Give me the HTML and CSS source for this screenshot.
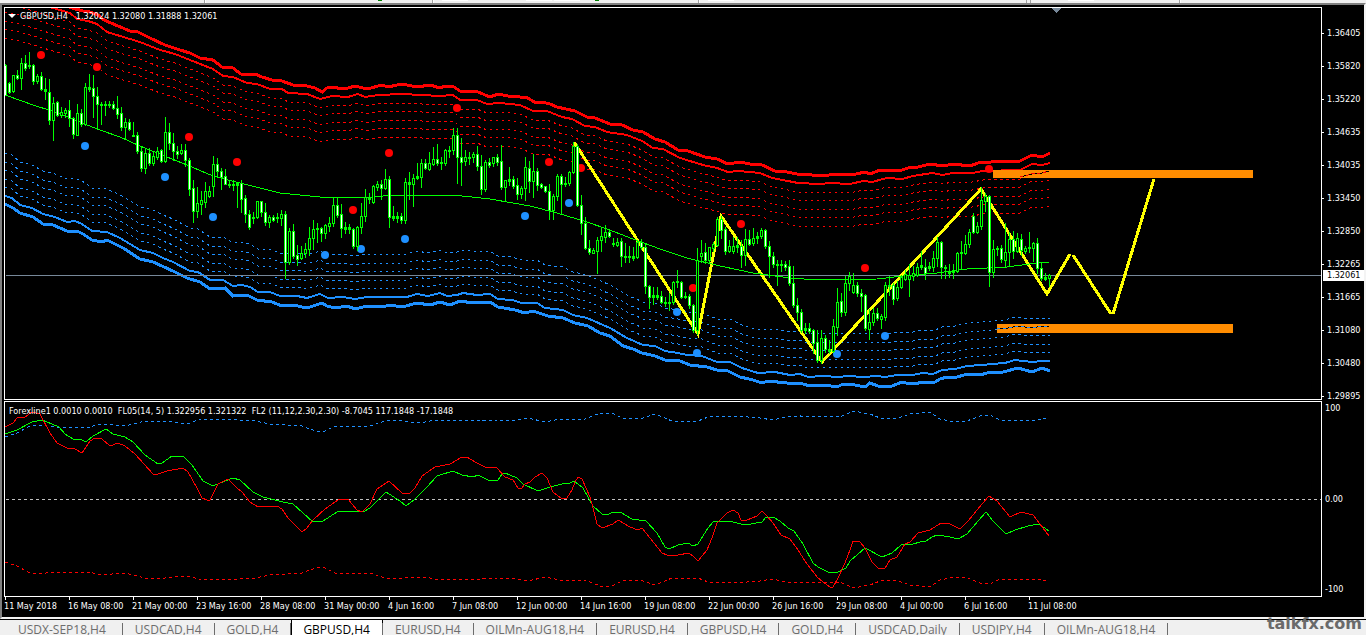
FILE: index.html
```html
<!DOCTYPE html>
<html lang="en">
<head>
<meta charset="utf-8">
<title>GBPUSD,H4</title>
<link rel="stylesheet" href="styles.css">
</head>
<body>
<div class="toolbar">
  <svg class="toolbar-art" width="100%" height="3" aria-hidden="true">
    <g fill="#a0a0a0"><rect x="204" width="1" height="3"/><rect x="432" width="1" height="3"/><rect x="698" width="1" height="3"/><rect x="1026" width="1" height="3"/><rect x="1030" width="1" height="3"/><rect x="1179" width="1" height="3"/><rect x="442" width="1" height="1"/><rect x="526" width="1" height="1"/><rect x="554" width="1" height="1"/><rect x="708" width="1" height="1"/><rect x="1068" width="1" height="1"/></g>
    <g fill="#fff"><rect x="205" width="1" height="3"/><rect x="433" width="1" height="3"/><rect x="699" width="1" height="3"/><rect x="1180" width="1" height="3"/><rect x="442" width="26" height="1"/><rect x="526" width="26" height="1"/><rect x="554" width="26" height="1"/><rect x="708" width="26" height="1"/><rect x="1068" width="26" height="1"/></g>
    <g fill="#008000"><rect x="378" width="4" height="1"/><rect x="595" width="4" height="1"/></g>
  </svg>
</div>
<main class="window">
  <section class="panel price-panel" aria-label="Price chart">
    <svg class="plot" width="100%" height="391">
      <g transform="translate(-5 -8)" shape-rendering="crispEdges" fill="none">
        <g id="upper-bands" stroke="#f00"></g>
        <g id="lower-bands" stroke="#1e90ff"></g>
        <line x1="6" y1="275.5" x2="100%" y2="275.5" stroke="#778899"/>
        <line x1="1300" y1="275.5" x2="1330" y2="275.5" stroke="#778899"/>
        <g id="zones">
          <rect x="993" y="170" width="260" height="8" fill="#ff8c00"/>
          <rect x="997" y="324" width="236" height="9" fill="#ff8c00"/>
          <polyline points="1020,177 1028,175 1035,173 1042,173 1049,171" stroke="#000"/>
          <polyline points="997,329 1008,328 1018,326 1032,328 1042,326 1049,326" stroke="#000"/>
          <polyline points="1020,177 1028,175 1035,173 1042,173 1049,171" stroke="#f00" stroke-dasharray="3 3"/>
          <polyline points="997,329 1008,328 1018,326 1032,328 1042,326 1049,326" stroke="#1e90ff" stroke-dasharray="3 3"/>
        </g>
        <g id="dots" shape-rendering="auto"></g>
        <g stroke="#ff0" stroke-width="3">
          <polyline points="574,142 698,334 721,216 822,362 981,189 1047,294 1070,254"/>
          <polyline points="1073,255 1111,314"/>
          <polyline points="1113,314 1154,179"/>
        </g>
        <polyline stroke="#0f0" points="5,95 33,105 52,111 68,117 87,125 100,130 120,137 140,146 167,157 187,165 213,176 240,183 260,188 280,193 300,195 320,197 373,197 393,195 453,195 490,199 513,203 530,206 557,213 587,222 607,229 633,239 660,249 687,258 720,266 753,273 790,278 817,280 877,279 903,276 937,273 967,269 1007,267 1037,263 1049,262"/>
        <g id="candles"></g>
        <path d="M1051 8h10l-5 5z" fill="#778899"/>
      </g>
    </svg>
    <p class="readout price-readout"><svg class="caret" width="8" height="4" aria-hidden="true"><path d="M0 0h8l-4 4z" fill="#fff"/></svg><span>GBPUSD,H4</span><span>1.32024 1.32080 1.31888 1.32061</span></p>
  </section>
  <div class="axis price-axis">
    <ol class="scale">
      <li>1.36405</li><li>1.35820</li><li>1.35220</li><li>1.34635</li><li>1.34035</li><li>1.33450</li><li>1.32850</li><li>1.32265</li><li>1.31665</li><li>1.31080</li><li>1.30480</li><li>1.29895</li>
    </ol>
    <span class="price-tag">1.32061</span>
  </div>
  <section class="panel indicator-panel" aria-label="Forexline indicator">
    <svg class="plot" width="100%" height="194">
      <g transform="translate(-5 -402)" shape-rendering="crispEdges" fill="none">
        <line x1="6" y1="499.5" x2="1400" y2="499.5" stroke="#c0c0c0" stroke-dasharray="3 3"/>
        <g id="oscillator"></g>
      </g>
    </svg>
    <p class="readout indicator-readout">Forexline1 0.0010 0.0010  FL05(14, 5) 1.322956 1.321322  FL2 (11,12,2.30,2.30) -8.7045 117.1848 -17.1848</p>
  </section>
  <div class="axis indicator-axis">
    <ol class="scale"><li>100</li><li>0.00</li><li>-100</li></ol>
  </div>
  <ol class="times">
    <li>11 May 2018</li><li>16 May 08:00</li><li>21 May 00:00</li><li>23 May 16:00</li><li>28 May 08:00</li><li>31 May 00:00</li><li>4 Jun 16:00</li><li>7 Jun 08:00</li><li>12 Jun 00:00</li><li>14 Jun 16:00</li><li>19 Jun 08:00</li><li>22 Jun 00:00</li><li>26 Jun 16:00</li><li>29 Jun 08:00</li><li>4 Jul 00:00</li><li>6 Jul 16:00</li><li>11 Jul 08:00</li>
  </ol>
</main>
<nav class="tabs" aria-label="Charts">
  <button>USDX-SEP18,H4</button><button>USDCAD,H4</button><button>GOLD,H4</button><button class="active">GBPUSD,H4</button><button>EURUSD,H4</button><button>OILMn-AUG18,H4</button><button>EURUSD,H4</button><button>GBPUSD,H4</button><button>GOLD,H4</button><button>USDCAD,Daily</button><button>USDJPY,H4</button><button>OILMn-AUG18,H4</button>
</nav>
<span class="brand">talkfx.com</span>
<script src="chart.js"></script>
</body>
</html>
```
FILE: styles.css
```css
* { box-sizing: border-box; }
body {
  margin: 0;
  height: 100vh;
  overflow: hidden;
  display: flex;
  flex-direction: column;
  position: relative;
  background: #f0f0f0;
  font-family: "DejaVu Sans Condensed", "DejaVu Sans", sans-serif;
}
ol, p { margin: 0; padding: 0; list-style: none; }
.toolbar { height: 3px; flex: none; background: #f0f0f0; }
.toolbar-art { display: block; }

.window {
  display: grid;
  grid-template-columns: minmax(0, 1fr) 42px;
  row-gap: 1px;
  padding: 2px 0 0 2px;
  background: #000;
  border: 2px solid;
  border-color: #808080 #f4f4f4 #f4f4f4 #808080;
  color: #fff;
  font-size: 9px;
  line-height: 8px;
}
.panel { position: relative; border: 1px solid #fff; }
.plot { display: block; }
.readout { position: absolute; top: 4px; white-space: pre; }
.price-readout { left: 3px; display: flex; align-items: center; gap: 4px; }
.price-readout span + span { padding-left: 4px; }
.indicator-readout { left: 4px; top: 5px; }

.axis { position: relative; }
.scale { height: 100%; display: flex; flex-direction: column; justify-content: space-between; }
.scale li { display: flex; align-items: center; gap: 3px; }
.price-axis .scale { padding-top: 22px; }
.price-axis li::before { content: ""; width: 2px; height: 1px; background: #fff; }
.price-tag {
  position: absolute;
  left: 1px;
  right: 0;
  top: 263px;
  padding-left: 4px;
  background: #fff;
  color: #000;
  line-height: 11px;
}
.indicator-axis .scale { padding: 3px 0 4px 3px; }

.times { grid-column: 1 / -1; display: flex; height: 19px; }
.times li { position: relative; width: 64px; padding-top: 4px; white-space: nowrap; }
.times li::before { content: ""; position: absolute; left: 1px; top: -1px; width: 1px; height: 3px; background: #fff; }

.tabs {
  flex: 1;
  display: flex;
  padding-left: 2px;
  border-top: 1px solid #000;
  background: #f0f0f0;
}
.tabs button {
  position: relative;
  height: 19px;
  padding: 0 13px 0 12px;
  border: 0;
  background: none;
  color: #6d6d6d;
  font-family: "Open Sans", "Noto Sans", sans-serif;
  font-size: 12px;
  line-height: 19px;
  white-space: nowrap;
}
.tabs button:first-child { padding: 0 17px 0 16px; }
.tabs button::after {
  content: "";
  position: absolute;
  right: 0;
  top: 3px;
  width: 1px;
  height: 14px;
  background: #6d6d6d;
}
.tabs .active {
  background: #fff;
  color: #000;
  box-shadow: inset 1px 0 #000, inset -1px 0 #000;
}
.brand {
  position: absolute;
  right: 4px;
  bottom: 1px;
  color: #6a6a6a;
  font-family: "DejaVu Sans", sans-serif;
  font-weight: 700;
  font-size: 16px;
  line-height: 20px;
}
```
FILE: chart.js
```js
const NS = "http://www.w3.org/2000/svg";

function add(parentId, name, attrs) {
  const el = document.createElementNS(NS, name);
  for (const key in attrs) el.setAttribute(key, attrs[key]);
  document.getElementById(parentId).appendChild(el);
}

// Each candle: high, body top, body bottom, low; a trailing 1 marks a falling bar.
const candles = `64,65,95,95,1 82,83,92,93,1 75,75,91,92 70,75,78,79,1 58,63,78,89 55,63,68,70,1 52,65,66,68,1 64,65,81,84,1 74,76,81,83 72,76,89,90,1 78,89,91,99,1 79,92,120,124,1 97,103,120,140 101,102,115,116,1 107,112,115,117 108,110,113,117 100,110,118,126,1 117,118,134,138,1 104,113,135,135 109,113,124,126,1
83,87,124,125 74,87,89,91,1 75,88,96,117,1 87,96,104,128,1 102,104,105,124 101,104,105,115 101,104,105,107 101,104,108,109,1 96,108,114,118,1 107,113,127,130,1 118,122,127,138 119,122,129,130,1 122,135,136,136 132,135,151,153,1 146,151,168,171,1 148,153,168,173 148,153,163,165,1 152,156,163,165 147,151,157,159 149,150,161,162,1
117,132,161,162 123,132,143,149,1 133,143,151,160,1 146,151,154,158,1 144,150,153,154 144,150,160,166,1 158,160,189,195,1 180,188,211,222,1 187,203,211,217 191,200,204,214 182,191,202,207 186,191,196,197 156,164,186,196 158,164,171,176,1 168,171,177,189,1 169,176,184,184,1 180,184,185,187 180,184,185,190 182,183,185,207 180,183,199,212,1
195,198,214,222,1 210,214,227,229,1 212,217,218,223 201,201,217,218 201,201,212,216,1 203,212,222,225,1 215,217,222,227 215,217,220,221,1 213,217,218,222 210,214,218,225 211,214,262,278,1 228,231,262,264 224,231,256,258,1 245,255,259,265,1 246,253,258,259 243,249,253,257 227,238,249,255 220,229,238,249 223,228,229,242 227,228,233,241,1
224,225,233,238 217,223,226,231 197,205,223,226 198,205,215,217,1 204,214,228,237,1 222,227,229,233 224,227,229,233 228,229,246,248,1 226,227,246,250 203,216,227,233 189,197,216,221 193,197,199,203 185,186,202,203 181,184,187,190 180,184,188,199,1 169,179,188,189 176,179,217,227,1 206,216,218,220 212,216,218,222 213,216,220,223,1
178,182,220,223 172,182,184,199,1 174,178,184,206 163,176,178,179 159,163,177,187 159,163,168,169,1 152,163,169,170 147,159,164,165 144,159,163,165,1 157,162,163,169 149,150,163,165 146,150,151,157 128,135,150,154 128,135,157,183,1 138,157,162,185,1 150,157,161,165 152,157,158,164 152,154,157,162 146,154,166,170,1 155,166,189,194,1
160,162,189,191 158,162,165,167,1 157,157,163,166 154,157,162,165,1 145,161,187,189,1 180,180,187,200 167,179,181,185,1 176,179,186,188,1 178,185,194,199,1 186,188,194,198 157,167,188,200 161,168,181,192,1 154,171,181,197 168,171,185,190,1 183,184,187,188,1 186,186,191,192,1 184,191,210,219,1 194,196,210,219 174,176,196,200 174,176,184,213,1
177,183,184,186 171,172,183,185 142,146,172,173 144,146,205,206,1 195,205,223,234,1 217,223,248,249,1 240,248,252,254,1 248,250,253,253 237,240,251,273 228,236,240,251 225,232,237,242 230,232,236,237,1 238,243,244,246 238,242,245,246 238,241,256,266,1 243,256,257,262 246,256,257,262 247,256,258,260 241,242,257,258 239,242,247,249,1
244,247,286,293,1 285,286,297,308,1 287,295,297,304 287,295,297,299 291,296,302,303,1 297,302,303,306 293,302,303,310 281,282,302,304 270,281,282,287 281,282,297,298,1 292,296,297,298 294,296,305,308,1 304,305,330,332,1 248,260,330,334 240,253,256,262 243,252,260,263,1 247,247,260,262 242,244,248,251 217,219,245,246 216,219,230,238,1
227,229,251,254,1 240,246,251,252 237,246,251,253 237,245,247,252 240,246,255,267,1 229,239,255,265 230,239,244,245,1 228,238,243,245 232,236,238,243 228,230,236,238 229,230,246,248,1 241,246,256,277,1 252,256,264,267,1 260,264,265,285 260,264,265,271 261,264,267,270,1 260,266,283,285,1 266,283,305,307,1 298,305,312,320,1 309,312,330,332,1
323,328,330,333 323,328,331,333,1 329,330,343,353,1 330,342,360,362,1 330,338,360,363 335,338,349,352,1 340,349,351,353 319,326,351,352 288,302,327,335 293,301,312,316,1 276,283,312,315 272,276,283,290 273,285,292,293 282,285,293,296,1 289,293,296,311,1 294,295,328,330,1 309,322,329,339 308,313,322,325 308,313,318,320,1 314,316,319,328
282,285,317,320 276,285,286,295 283,285,299,304,1 281,287,298,300 275,277,287,288 270,274,279,280 264,275,279,296 266,273,276,280 263,267,275,276 251,265,267,269 259,267,273,279,1 262,266,268,270 251,258,267,271 237,242,258,266 241,242,267,278,1 265,267,268,278 264,271,273,277 264,271,272,278 252,253,271,272 241,252,253,269
235,244,253,254 229,232,244,247 213,216,232,233,1 222,226,232,233 187,200,226,229 193,196,201,211 195,196,272,286,1 240,249,272,277 246,248,249,255 245,248,259,262,1 223,252,260,266 232,239,252,265 231,239,251,258,1 233,238,251,252 234,239,250,255,1 246,248,251,253 232,247,248,252 242,243,248,261 238,243,268,273,1 263,268,278,280,1
273,277,279,280 274,275,278,286`.split(/\s+/).map(c => c.split(",").map(Number));

candles.forEach(([high, top, bottom, low, falling], i) => {
  const x = 5 + i * 4;
  add("candles", "rect", { x, y: high, width: 1, height: low - high + 1, fill: "#0f0" });
  add("candles", "rect", { x: x - 1, y: top, width: 3, height: bottom - top + 1, fill: "#0f0" });
  if (bottom - top > 2) {
    add("candles", "rect", { x, y: top + 1, width: 1, height: bottom - top - 1, fill: falling ? "#fff" : "#000" });
  }
});

const upperOuter = "60,4 72,8 83,11 90,12 98,15 104,20 118,26 130,31 138,32 150,38 165,45 180,50 190,53 200,58 213,60 222,67 233,68 241,74 248,75 255,74 262,77 272,80 282,81 293,85 307,86 315,88 322,92 327,88 335,87 340,89 348,88 355,86 367,89 382,85 388,87 402,84 417,87 430,85 440,88 445,86 454,87 460,91 478,92 490,97 498,94 508,96 520,97 526,97 536,103 542,102 550,104 557,107 575,111 587,117 595,118 610,124 622,125 633,130 643,132 655,139 665,142 678,150 688,151 705,157 717,159 728,164 740,162 750,164 762,165 775,171 787,172 797,174 812,175 823,176 835,174 852,175 865,172 870,174 880,170 902,170 908,168 918,167 930,164 943,166 953,164 970,166 978,163 1005,161 1018,162 1032,155 1042,157 1050,153";
const upperInner = "5,-5 20,-2 40,4 53,8 70,13 77,19 88,21 97,24 107,32 120,36 140,42 160,50 175,54 190,60 213,69 223,76 233,77 247,83 257,84 270,89 282,89 288,93 307,94 320,99 332,96 348,97 358,94 365,97 378,95 403,94 440,96 453,95 460,100 477,100 487,104 500,103 520,105 533,111 547,111 562,117 572,119 585,126 595,127 607,132 627,135 642,141 653,148 663,149 680,158 703,165 717,168 728,172 738,171 760,173 772,178 788,181 798,183 820,184 830,183 850,184 863,181 872,182 887,178 902,179 913,176 932,173 943,175 952,173 972,173 983,171 1020,170 1032,164 1042,165 1050,163";
const lowerInner = "5,196 12,198 20,205 32,208 43,214 55,217 67,222 75,221 82,224 92,231 107,232 120,238 140,250 153,253 163,258 173,262 190,271 198,272 210,280 223,280 233,286 242,285 250,287 258,292 270,292 280,296 297,296 307,298 320,294 328,298 343,297 355,299 367,297 407,297 417,294 428,296 440,293 447,296 457,295 463,293 477,295 490,294 498,299 512,300 522,303 537,303 545,308 563,310 573,315 587,318 610,328 627,338 643,345 655,346 665,351 678,353 687,355 702,356 717,362 730,362 742,368 758,373 775,372 790,375 800,374 808,377 823,376 838,377 848,376 863,377 877,376 885,377 897,375 913,375 922,373 933,374 942,370 955,369 967,366 982,365 992,364 1005,363 1015,360 1032,362 1042,361 1050,361";
const lowerOuter = "5,204 13,208 20,213 33,217 43,224 53,225 67,231 77,231 83,234 92,240 102,242 107,240 123,248 140,259 153,262 173,271 187,278 200,282 210,289 225,288 233,296 247,295 257,300 272,302 282,306 293,305 307,308 322,303 327,306 335,308 347,306 355,309 367,306 382,307 390,305 402,307 417,303 430,305 440,302 450,305 460,301 473,303 490,302 498,307 515,310 525,313 533,311 548,316 563,318 575,323 588,326 600,333 610,336 623,346 633,349 642,353 655,356 665,360 680,361 690,365 707,367 717,370 728,371 740,377 753,380 762,383 768,381 787,383 803,384 810,386 825,385 837,387 843,384 855,385 865,387 870,383 878,386 892,386 902,382 910,384 927,382 935,382 940,379 947,377 953,378 968,374 980,375 987,373 1003,372 1018,368 1032,372 1042,368 1050,371";

add("upper-bands", "polyline", { points: upperOuter, "stroke-width": 3 });
add("upper-bands", "polyline", { points: upperInner, "stroke-width": 2 });
add("lower-bands", "polyline", { points: lowerOuter, "stroke-width": 3 });
add("lower-bands", "polyline", { points: lowerInner, "stroke-width": 2 });
for (const step of [9, 17, 26, 34, 43]) {
  add("upper-bands", "polyline", { points: upperInner, "stroke-dasharray": "2.5 3.5", transform: `translate(0 ${step})` });
  add("lower-bands", "polyline", { points: lowerInner, "stroke-dasharray": "2.5 3.5", transform: `translate(0 ${-step})` });
}

const sell = [[41,55],[97,67],[189,137],[237,162],[353,210],[389,153],[457,108],[549,162],[581,168],[693,288],[741,224],[865,268],[989,169]];
const buy = [[85,146],[165,177],[213,217],[325,255],[361,249],[405,239],[525,216],[569,203],[677,312],[697,353],[837,354],[885,336]];
for (const [cx, cy] of sell) add("dots", "circle", { cx, cy, r: 4, fill: "#f00" });
for (const [cx, cy] of buy) add("dots", "circle", { cx, cy, r: 4, fill: "#1e90ff" });

const range = "5,437 17,433 28,427 38,425 55,427 90,427 100,424 125,426 145,421 165,421 180,423 190,423 200,419 240,420 255,421 270,424 285,425 302,426 318,432 325,431 335,426 370,426 385,421 395,420 410,422 425,422 435,420 480,420 495,421 515,420 528,418 545,422 560,419 585,419 600,413 612,413 622,418 640,419 655,414 672,421 698,421 708,417 735,416 760,418 773,420 785,417 800,416 840,417 853,411 870,414 880,418 895,419 910,414 930,412 940,419 955,422 967,421 980,416 990,415 1000,420 1038,420 1046,418";
const slow = "5,434 17,430 32,422 42,420 52,424 59,427 65,434 73,439 80,439 86,442 93,436 106,429 113,434 125,437 133,442 145,455 158,464 162,463 172,456 183,456 192,465 203,481 213,486 220,483 233,478 240,480 253,492 263,497 283,502 293,504 313,522 323,521 337,512 345,511 363,512 370,508 386,492 400,501 406,506 415,499 427,487 437,476 453,471 462,475 473,477 478,475 488,480 498,480 502,474 505,473 517,478 523,484 538,491 550,487 562,484 570,483 574,481 583,488 593,506 602,514 607,515 613,512 620,512 632,519 646,521 657,533 665,547 669,549 678,545 688,543 693,546 698,544 708,528 713,522 720,521 733,522 745,525 762,522 766,517 773,517 780,521 788,528 794,531 803,544 813,563 818,567 830,573 838,572 846,568 850,561 865,548 882,557 892,553 901,545 913,544 920,542 926,541 932,537 937,535 950,537 958,539 967,534 978,521 986,512 993,521 1006,534 1015,530 1028,526 1039,524 1049,531";
const fast = "5,427 13,423 17,418 25,417 32,412 40,414 50,433 57,443 67,448 75,449 82,453 90,441 95,438 102,439 110,446 118,443 125,446 135,454 153,474 158,474 167,471 183,468 188,472 197,488 202,498 207,500 210,500 218,484 228,479 237,488 242,492 250,502 258,507 277,506 282,509 288,518 302,532 307,528 313,520 325,509 338,500 348,499 357,510 362,512 370,504 377,489 389,481 402,493 410,493 415,488 422,476 435,467 450,464 462,457 467,457 475,462 485,467 497,468 505,477 513,480 518,488 522,488 525,484 530,482 535,477 542,473 547,478 553,492 562,499 567,498 572,490 575,482 578,477 582,479 590,497 593,508 597,524 602,528 613,524 618,520 630,527 638,530 642,528 650,538 662,553 667,555 678,555 689,553 693,556 698,561 707,550 712,538 717,523 727,513 733,510 738,513 741,520 747,520 757,516 762,511 767,516 773,523 781,535 790,539 798,550 807,564 818,578 830,587 833,587 838,578 845,563 850,550 853,541 860,542 865,548 872,562 878,568 882,569 885,568 890,560 897,557 905,544 910,542 918,533 930,530 941,523 950,524 960,529 968,521 982,504 989,496 997,501 1010,517 1021,512 1033,515 1040,524 1049,536";

add("oscillator", "polyline", { points: range, stroke: "#1e90ff", "stroke-dasharray": "3 3" });
add("oscillator", "polyline", { points: range, stroke: "#f00", "stroke-dasharray": "3 3", transform: "translate(0 999) scale(1 -1)" });
add("oscillator", "polyline", { points: slow, stroke: "#0f0" });
add("oscillator", "polyline", { points: fast, stroke: "#f00" });
```
